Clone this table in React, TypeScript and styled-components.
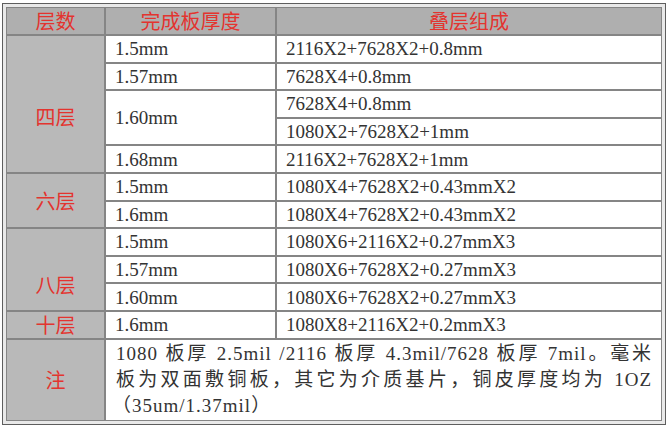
import React from "react";
import styled, { createGlobalStyle } from "styled-components";

const GlobalStyle = createGlobalStyle`
    html, body {
        margin: 0;
        padding: 0;
        background: #ffffff;
    }
`;

type Row = { thick: string; stacks: string[] };
type Group = { label: string; shift: number; rows: Row[] };

// 层数分组（四层 / 六层 / 八层 / 十层）
const groups: Group[] = [
    {
        label: "四层",
        shift: 27,
        rows: [
            { thick: "1.5mm", stacks: ["2116X2+7628X2+0.8mm"] },
            { thick: "1.57mm", stacks: ["7628X4+0.8mm"] },
            { thick: "1.60mm", stacks: ["7628X4+0.8mm", "1080X2+7628X2+1mm"] },
            { thick: "1.68mm", stacks: ["2116X2+7628X2+1mm"] },
        ],
    },
    {
        label: "六层",
        shift: 0,
        rows: [
            { thick: "1.5mm", stacks: ["1080X4+7628X2+0.43mmX2"] },
            { thick: "1.6mm", stacks: ["1080X4+7628X2+0.43mmX2"] },
        ],
    },
    {
        label: "八层",
        shift: 30,
        rows: [
            { thick: "1.5mm", stacks: ["1080X6+2116X2+0.27mmX3"] },
            { thick: "1.57mm", stacks: ["1080X6+7628X2+0.27mmX3"] },
            { thick: "1.60mm", stacks: ["1080X6+7628X2+0.27mmX3"] },
        ],
    },
    {
        label: "十层",
        shift: 0,
        rows: [{ thick: "1.6mm", stacks: ["1080X8+2116X2+0.2mmX3"] }],
    },
];

const App = () => {
    const body: React.ReactNode[] = [];

    groups.forEach((g) => {
        const span = g.rows.reduce((n, r) => n + r.stacks.length, 0);
        let first = true;
        g.rows.forEach((r) => {
            r.stacks.forEach((s, i) => {
                body.push(
                    <DataRow key={g.label + r.thick + i + s}>
                        {first && (
                            <LabelCell rowSpan={span} $shift={g.shift}>
                                {g.label}
                            </LabelCell>
                        )}
                        {i === 0 && <Cell rowSpan={r.stacks.length}>{r.thick}</Cell>}
                        <Cell>{s}</Cell>
                    </DataRow>
                );
                first = false;
            });
        });
    });

    return (
        <>
            <GlobalStyle />
            <Frame>
                <Table>
                    <colgroup>
                        <col style={{ width: 99 }} />
                        <col style={{ width: 171 }} />
                        <col style={{ width: 386 }} />
                    </colgroup>
                    <thead>
                        <HeadRow>
                            <HeadCell>层数</HeadCell>
                            <HeadCell>完成板厚度</HeadCell>
                            <HeadCell>叠层组成</HeadCell>
                        </HeadRow>
                    </thead>
                    <tbody>
                        {body}
                        <NoteRow>
                            <LabelCell $shift={0}>注</LabelCell>
                            <NoteCell colSpan={2}>
                                <NoteLine $full>
                                    1080 板厚 2.5mil /2116 板厚 4.3mil/7628 板厚 7mil。毫米
                                </NoteLine>
                                <NoteLine $full>
                                    板为双面敷铜板，其它为介质基片，铜皮厚度均为 1OZ
                                </NoteLine>
                                <NoteLine>（35um/1.37mil）</NoteLine>
                            </NoteCell>
                        </NoteRow>
                    </tbody>
                </Table>
            </Frame>
        </>
    );
};

// 外框（双线边框）
const Frame = styled.div`
    margin: 3px 0 0 2px;
    width: 656px;
    padding: 3px;
    border: 1px solid #5e5e5e;
    background: #e9e9e9;
`;

const Table = styled.table`
    width: 656px;
    table-layout: fixed;
    border-collapse: separate;
    border-spacing: 0;
    background: #ffffff;
    font-family: "Liberation Serif", "Noto Sans CJK SC", serif;
    color: #333333;
`;

const HeadRow = styled.tr`
    height: 28px;
`;

const DataRow = styled.tr`
    height: 27.6px;
`;

const NoteRow = styled.tr`
    height: 82px;
`;

const baseCell = `
    box-sizing: border-box;
    border: 1px solid #858585;
    padding: 0;
    line-height: 1;
`;

const HeadCell = styled.th`
    ${baseCell}
    background: #afafaf;
    color: #e3342f;
    font-family: "Noto Sans CJK SC", sans-serif;
    font-size: 20px;
    font-weight: 400;
    text-align: center;
    vertical-align: middle;
`;

const LabelCell = styled.td<{ $shift: number }>`
    ${baseCell}
    background: #b9b9b9;
    color: #e3342f;
    font-family: "Noto Sans CJK SC", sans-serif;
    font-size: 20px;
    font-weight: 400;
    text-align: center;
    vertical-align: middle;
    padding-top: ${(p) => p.$shift}px;
`;

const Cell = styled.td`
    ${baseCell}
    padding-left: 9px;
    font-size: 19px;
    text-align: left;
    vertical-align: middle;
    white-space: nowrap;
`;

const NoteCell = styled.td`
    ${baseCell}
    padding: 0 9px 0 10px;
    font-size: 19px;
    vertical-align: middle;
`;

const NoteLine = styled.div<{ $full?: boolean }>`
    height: 26px;
    line-height: 26px;
    white-space: nowrap;
    letter-spacing: 1px;
    text-align: ${(p) => (p.$full ? "justify" : "left")};
    text-align-last: ${(p) => (p.$full ? "justify" : "left")};
    margin-left: ${(p) => (p.$full ? "0" : "-4px")};
`;

export default App;
